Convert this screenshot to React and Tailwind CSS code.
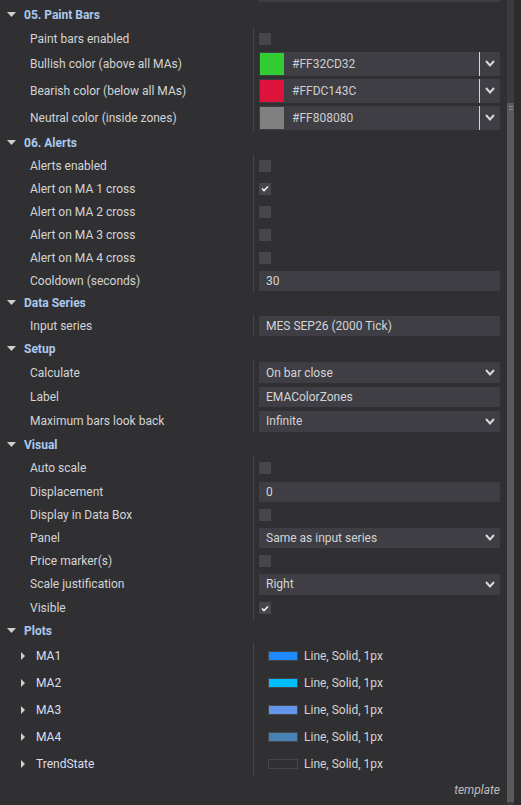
import React from 'react';

const Chevron = () => (
  <svg width="10" height="7" viewBox="0 0 10 7" className="shrink-0">
    <polyline points="1,1 5,5.5 9,1" fill="none" stroke="#d8d8d8" strokeWidth="2" />
  </svg>
);

const Check = () => (
  <svg width="8" height="7" viewBox="0 0 8 7">
    <polyline points="1,3.5 3,5.5 7,1.5" fill="none" stroke="#f0f0f0" strokeWidth="1.6" />
  </svg>
);

const CheckBox = ({ checked }) => (
  <div className="w-3 h-3 bg-[#46464c] flex items-center justify-center">
    {checked && <Check />}
  </div>
);

const ColorPick = ({ color, text }) => (
  <div className="flex-1 h-6 bg-[#3e3e44] flex items-center">
    <div className="w-6 h-[22px] ml-px" style={{ backgroundColor: color }} />
    <span className="flex-1 pl-2 text-[#cfcfcf]">{text}</span>
    <div className="w-px h-6 bg-[#d6d6d6]" />
    <div className="w-5 flex justify-center"><Chevron /></div>
  </div>
);

const Field = ({ text, h, select }) => (
  <div className={`flex-1 bg-[#3e3e44] flex items-center pl-[7px] pr-[5px] text-[#d4d4d4] ${h}`}>
    <span className="flex-1">{text}</span>
    {select && <Chevron />}
  </div>
);

const sections = [
  {
    title: '05. Paint Bars', h: 'h-[24px]',
    rows: [
      { label: 'Paint bars enabled', h: 'h-[23px]', w: <CheckBox /> },
      { label: 'Bullish color (above all MAs)', h: 'h-[27px]', w: <ColorPick color="#32CD32" text="#FF32CD32" /> },
      { label: 'Bearish color (below all MAs)', h: 'h-[27px]', w: <ColorPick color="#DC143C" text="#FFDC143C" /> },
      { label: 'Neutral color (inside zones)', h: 'h-[27px]', w: <ColorPick color="#808080" text="#FF808080" /> },
    ],
  },
  {
    title: '06. Alerts', h: 'h-[23px]',
    rows: [
      { label: 'Alerts enabled', h: 'h-[23px]', w: <CheckBox /> },
      { label: 'Alert on MA 1 cross', h: 'h-[23px]', w: <CheckBox checked /> },
      { label: 'Alert on MA 2 cross', h: 'h-[23px]', w: <CheckBox /> },
      { label: 'Alert on MA 3 cross', h: 'h-[23px]', w: <CheckBox /> },
      { label: 'Alert on MA 4 cross', h: 'h-[23px]', w: <CheckBox /> },
      { label: 'Cooldown (seconds)', h: 'h-[23px]', w: <Field text="30" h="h-[20px]" /> },
    ],
  },
  {
    title: 'Data Series', h: 'h-[22px]',
    rows: [
      { label: 'Input series', h: 'h-[23px]', w: <Field text="MES SEP26 (2000 Tick)" h="h-[20px]" /> },
    ],
  },
  {
    title: 'Setup', h: 'h-[23px]',
    rows: [
      { label: 'Calculate', h: 'h-[25px]', w: <Field text="On bar close" h="h-[21px]" select /> },
      { label: 'Label', h: 'h-[24px]', w: <Field text="EMAColorZones" h="h-[20px]" /> },
      { label: 'Maximum bars look back', h: 'h-[24px]', w: <Field text="Infinite" h="h-[21px]" select /> },
    ],
  },
  {
    title: 'Visual', h: 'h-[23px]',
    rows: [
      { label: 'Auto scale', h: 'h-[24px]', w: <CheckBox /> },
      { label: 'Displacement', h: 'h-[23px]', w: <Field text="0" h="h-[20px]" /> },
      { label: 'Display in Data Box', h: 'h-[23px]', w: <CheckBox /> },
      { label: 'Panel', h: 'h-[23px]', w: <Field text="Same as input series" h="h-[20px]" select /> },
      { label: 'Price marker(s)', h: 'h-[23px]', w: <CheckBox /> },
      { label: 'Scale justification', h: 'h-[24px]', w: <Field text="Right" h="h-[21px]" select /> },
      { label: 'Visible', h: 'h-[24px]', w: <CheckBox checked /> },
    ],
  },
];

const plots = [
  { name: 'MA1', color: '#1E88FF' },
  { name: 'MA2', color: '#00BFFF' },
  { name: 'MA3', color: '#6495ED' },
  { name: 'MA4', color: '#4682B4' },
  { name: 'TrendState', color: 'transparent' },
];

const Header = ({ title, h }) => (
  <div className={`flex items-center pl-[7px] ${h}`}>
    <svg width="9" height="6" viewBox="0 0 9 6" className="mr-2">
      <polygon points="0,0 9,0 4.5,5" fill="#cfcfcf" />
    </svg>
    <span className="font-bold text-[#abc8ee]">{title}</span>
  </div>
);

const App = () => {
  return (
    <div
      className="w-[521px] h-[805px] bg-[#303033] flex overflow-hidden text-[12px] text-[#d4d4d4]"
      style={{ fontFamily: 'Roboto, "Noto Sans", sans-serif' }}
    >
      <div className="flex-1 flex flex-col pr-[7px]">
        {/* tail of previous field */}
        <div className="flex h-[3px]">
          <div className="w-[254px]" />
          <div className="flex-1 pl-[5px]">
            <div className="h-[2px] bg-[#3e3e44]" />
          </div>
        </div>

        {sections.map((s) => (
          <div key={s.title}>
            <Header title={s.title} h={s.h} />
            {s.rows.map((r) => (
              <div key={r.label} className={`flex ${r.h}`}>
                <div className="w-[253px] flex items-center pl-[30px]">{r.label}</div>
                <div className="flex-1 border-l border-[#46464a] pl-[5px] flex items-center">{r.w}</div>
              </div>
            ))}
          </div>
        ))}

        <Header title="Plots" h="h-[22px]" />
        {plots.map((p) => (
          <div key={p.name} className="flex h-[27px]">
            <div className="w-[253px] flex items-center pl-[21px]">
              <svg width="4" height="8" viewBox="0 0 4 8" className="mr-[11px]">
                <polygon points="0,0 4,4 0,8" fill="#cfcfcf" />
              </svg>
              <span className="text-[#d8dff0]">{p.name}</span>
            </div>
            <div className="flex-1 border-l border-[#46464a] pl-[14px] flex items-center">
              <div className="w-[30px] h-[10px] border border-[#45454b]" style={{ backgroundColor: p.color }} />
              <span className="ml-[6px]">Line, Solid, 1px</span>
            </div>
          </div>
        ))}

        <div className="flex-1 flex items-center justify-end pb-[2px]">
          <span className="italic text-[#bdbdbd]">template</span>
        </div>
      </div>

      {/* scrollbar */}
      <div className="w-[7px] bg-[#3b3b3d] flex flex-col pt-[103px] pb-[3px]">
        <div className="flex-1 bg-[#5a5a5c] flex flex-col items-center pt-[3px] gap-[2px]">
          <div className="w-[4px] h-px bg-[#8a8a8a]" />
          <div className="w-[4px] h-px bg-[#8a8a8a]" />
        </div>
      </div>
      <div className="w-[7px] bg-[#2c2c2e]" />
    </div>
  );
};

export default App;
